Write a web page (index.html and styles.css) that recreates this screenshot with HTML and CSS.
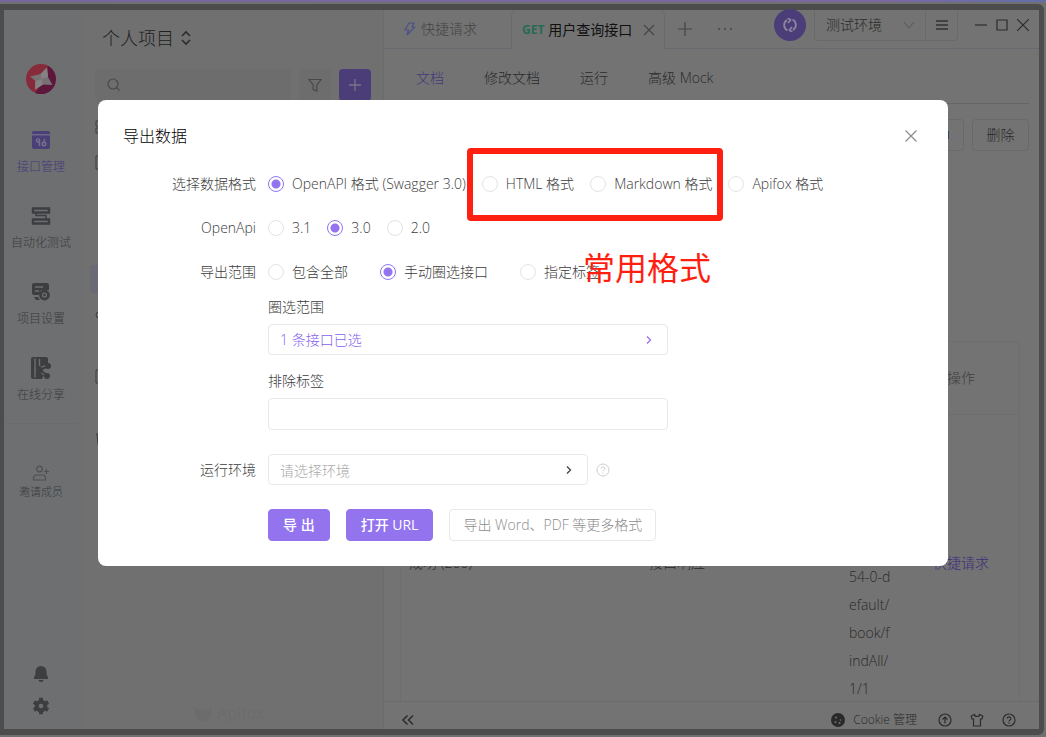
FILE: index.html
```html
<!DOCTYPE html>
<html lang="zh-CN">
<head>
<meta charset="utf-8">
<title>导出数据</title>
<link rel="stylesheet" href="styles.css">
</head>
<body>
<div class="window">
  <nav class="rail">
    <svg class="avatar" viewBox="0 0 30 30"><circle cx="15" cy="15" r="15" fill="#872b3b"/><path d="M22 2A15 15 0 0 1 9 29L16 20z" fill="#5e173c"/><path d="M4 12.500L14.500 10 21 3.500 22 13 26.500 21 17 20.500 9 25.500 9.500 17z" fill="#777174"/><path d="M14.500 10L21 3.500 22 13 15.500 15z" fill="#858283"/><path d="M9 25.500L9.500 17 15.500 15 17 20.500z" fill="#858283"/></svg>
    <a class="rail-item current" href="#"><svg viewBox="0 0 24 24"><rect x="3" y="3" width="18" height="18" rx="2" fill="#4b3f77"/><path d="M3 7.500h18V6H3z" fill="#6d6789"/><g fill="none" stroke="#77738a" stroke-width="1.400"><circle cx="9" cy="12.500" r="1.600"/><path d="M10.500 12.500v5.500M16 11l-2 4"/><circle cx="15" cy="16" r="1.800"/></g></svg>接口管理</a>
    <a class="rail-item" href="#"><svg viewBox="0 0 24 24" fill="none" stroke="#3d3e40" stroke-width="2.400"><path d="M4 4.500h16v4H4zM4 15.500h16v4H4z"/><path d="M7 9v2.500h10V15" stroke-width="1.500"/></svg>自动化测试</a>
    <a class="rail-item" href="#"><svg viewBox="0 0 24 24"><path d="M5 3h13a2 2 0 0 1 2 2v5H12l-2 5H5a2 2 0 0 1-2-2V5a2 2 0 0 1 2-2zM5 17h4l2 3H7z" fill="#3d3e40"/><path d="M6 7h8M6 11h4" stroke="#6d6f71" stroke-width="1.500"/><circle cx="15.500" cy="15" r="4" fill="#6d6f71" stroke="#3d3e40" stroke-width="2.800"/><circle cx="15.500" cy="15" r="1.300" fill="#3d3e40"/></svg>项目设置</a>
    <a class="rail-item" href="#"><svg viewBox="0 0 24 24"><path d="M4 1h13a2 2 0 0 1 2 2v5l-8 3 4 8-2 4H4a2 2 0 0 1-2-2V3a2 2 0 0 1 2-2z" fill="#3d3e40"/><path d="M6 2.500v19M10.500 3v7" stroke="#6d6f71" stroke-width="1.400"/><path d="M19 10l-8 4 8 6" fill="none" stroke="#6d6f71" stroke-width="4"/><path d="M19 10l-8 4 8 6" fill="none" stroke="#3d3e40" stroke-width="2"/><circle cx="19" cy="10" r="3" fill="#3d3e40"/><circle cx="11" cy="14" r="3" fill="#3d3e40"/><circle cx="18" cy="20" r="3" fill="#3d3e40"/></svg>在线分享</a>
    <hr class="rail-line">
    <a class="invite" href="#"><svg viewBox="0 0 20 20" fill="none" stroke="#4f5052" stroke-width="1.200"><circle cx="8.500" cy="6" r="2.800"/><path d="M2.500 17v-2a3 3 0 0 1 3-3h6a3 3 0 0 1 3 3v2zM15.500 6v5M13 8.500h5"/></svg>邀请成员</a>
    <div class="rail-bottom">
      <svg viewBox="0 0 18 18" fill="#3d3e40"><path d="M9 1a5.500 5.500 0 0 1 5.500 5.500V9l1.500 3.500c.4 1-.2 1.500-1 1.500H3c-.8 0-1.400-.5-1-1.500L3.500 9V6.500A5.500 5.500 0 0 1 9 1zM6.500 15h5a2.500 2 0 0 1-5 0z"/></svg>
      <svg viewBox="0 0 18 18"><g fill="none" stroke="#3d3e40"><circle cx="9" cy="9" r="4.300" stroke-width="4"/><path d="M9 .8v3M9 14.200v3M1.900 4.900l2.600 1.500M13.500 11.600l2.600 1.500M16.100 4.900l-2.600 1.500M4.500 11.600l-2.600 1.500" stroke-width="4"/></g></svg>
    </div>
  </nav>

  <aside class="sidebar">
    <div class="project">个人项目<svg viewBox="0 0 12 16" fill="none" stroke="#2c2c2c" stroke-width="1.600"><path d="M2 6l4-4 4 4M2 10l4 4 4-4"/></svg></div>
    <div class="tools">
      <label class="search"><svg viewBox="0 0 16 16" fill="none" stroke="#4a4a4a" stroke-width="1.200"><circle cx="7" cy="7" r="5"/><path d="M10.700 10.700l3 3"/></svg><input type="text" aria-label="搜索"></label>
      <button class="tool" aria-label="筛选"><svg viewBox="0 0 16 16" fill="none" stroke="#484848" stroke-width="1.200"><path d="M2 2.500h12L9.800 8v6L6.200 12.500V8z"/></svg></button>
      <button class="tool add" aria-label="新建"><svg viewBox="0 0 16 16" stroke="#77748a" stroke-width="1.300"><path d="M8 2v12M2 8h12"/></svg></button>
    </div>
    <div class="tree">
      <div class="branch"><svg viewBox="0 0 16 16"><path d="M1 2h5v5H1zM1 9h5v5H1zM9 2h5v5H9z"/></svg></div>
      <div class="branch section"><svg viewBox="0 0 16 16"><path d="M1 1h13v13H1z"/></svg></div>
      <div class="branch picked"></div>
      <div class="branch folder"><svg viewBox="0 0 16 16"><circle cx="4" cy="8" r="3"/></svg></div>
      <div class="branch folder"><svg viewBox="0 0 16 16"><path d="M1 1h13v13H1z"/></svg></div>
      <div class="branch"><svg viewBox="0 0 16 16"><path d="M1 3h13M2 3l1 11h8"/></svg></div>
    </div>
    <div class="brand"><svg viewBox="0 0 20 18"><path d="M2 2c2 4 5 5 8 3 3 2 6 1 8-3 2 7-1 15-8 15S0 9 2 2z" fill="#6c6c6c"/></svg>Apifox</div>
  </aside>

  <main class="main">
    <header class="topbar">
      <button class="tab"><svg viewBox="0 0 12 14" fill="none" stroke="#4b5187" stroke-width="1.200"><path d="M5 1h5L8 5h3L3 13l1.500-5H1z"/></svg>快捷请求</button>
      <button class="tab tab-open"><b>GET</b>用户查询接口<svg class="cross" viewBox="0 0 12 12" stroke="#464646" stroke-width="1.200"><path d="M1 1l10 10M11 1L1 11"/></svg></button>
      <button class="ghost" aria-label="新标签"><svg viewBox="0 0 16 16" stroke="#454545" stroke-width="1.200"><path d="M8 1v14M1 8h14"/></svg></button>
      <button class="ghost" aria-label="更多"><svg viewBox="0 0 16 16" fill="#454545"><circle cx="2" cy="8" r="1"/><circle cx="8" cy="8" r="1"/><circle cx="14" cy="8" r="1"/></svg></button>
      <span class="fill"></span>
      <button class="sync" aria-label="同步"><svg viewBox="0 0 16 16" fill="none" stroke="#8a86a0" stroke-width="1.800"><path d="M5.500 13.500A6 6 0 0 1 5 3M10.500 2.500A6 6 0 0 1 11 13M9 2.500L5.500 1.500M9 2.500L6 6M7 13.500l3.500 1M7 13.500L10 10"/></svg></button>
      <div class="env">
        <select aria-label="环境"><option>测试环境</option></select>
        <svg class="env-arrow" viewBox="0 0 12 12" fill="none" stroke="#555"><path d="M1 3l5 6 5-6"/></svg>
        <button class="env-menu" aria-label="菜单"><svg viewBox="0 0 14 14" stroke="#333" stroke-width="1.500"><path d="M1 3h12M1 7h12M1 11h12"/></svg></button>
      </div>
      <div class="controls">
        <svg viewBox="0 0 12 12" stroke="#2c2c2c" stroke-width="1.200"><path d="M0 6h12"/></svg>
        <svg viewBox="0 0 12 12" fill="none" stroke="#2c2c2c" stroke-width="1.200"><path d="M1 1h10v10H1z"/></svg>
        <svg viewBox="0 0 12 12" stroke="#2c2c2c" stroke-width="1.200"><path d="M0 0l12 12M12 0L0 12"/></svg>
      </div>
    </header>
    <div class="page">
      <div class="subtabs"><a class="on" href="#">文档</a><a href="#">修改文档</a><a href="#">运行</a><a href="#">高级 Mock</a></div>
      <div class="actions"><button class="action code" aria-label="代码"><i></i></button><button class="action">删除</button></div>
      <div class="table-box">
        <table>
          <colgroup><col class="c-name"><col class="c-kind"><col class="c-url"><col></colgroup>
          <thead><tr><th></th><th></th><th></th><th class="op">操作</th></tr></thead>
          <tbody><tr><td>成功 (200)</td><td>接口响应</td><td class="url">54-0-d<br>efault/<br>book/f<br>indAll/<br>1/1</td><td class="op"><a href="#">快捷请求</a></td></tr></tbody>
        </table>
      </div>
    </div>
    <footer class="status">
      <svg viewBox="0 0 14 14" fill="none" stroke="#2c2c2c" stroke-width="1.500"><path d="M6.500 2.500L2 7l4.500 4.500M12 2.500L7.500 7l4.500 4.500"/></svg>
      <span class="fill"></span>
      <a class="cookie" href="#"><svg viewBox="0 0 14 14"><circle cx="7" cy="7" r="7" fill="#292929"/><g fill="#707070"><circle cx="5" cy="4.500" r="1"/><circle cx="9.500" cy="7" r=".8"/><circle cx="4.500" cy="9" r="1"/><circle cx="8.500" cy="10" r="1"/></g></svg>Cookie 管理</a>
      <svg viewBox="0 0 14 14" fill="none" stroke="#2c2c2c" stroke-width="1.200"><circle cx="7" cy="7" r="6"/><path d="M7 10.500v-6M4.500 6.500L7 4l2.500 2.500"/></svg>
      <svg viewBox="0 0 14 14" fill="none" stroke="#2c2c2c" stroke-width="1.200"><path d="M4.500 1.500L1.200 3l.8 3h1.500v7h7V6H12l.8-3-3.300-1.500a2.500 2 0 0 1-5 0z"/></svg>
      <svg viewBox="0 0 14 14" fill="none" stroke="#2c2c2c" stroke-width="1.200"><circle cx="7" cy="7" r="6"/><path d="M5.200 5.600a1.800 1.800 0 1 1 2.600 1.600c-.6.300-.8.600-.8 1.200M7 9.500v1.200"/></svg>
    </footer>
  </main>
</div>

<div class="mask">
  <section class="dialog" role="dialog" aria-labelledby="dialog-title">
    <div class="dialog-head"><h1 id="dialog-title">导出数据</h1><button class="close" aria-label="关闭"><svg viewBox="0 0 12 12" stroke="#8c8c8c" stroke-width="1.200"><path d="M.5.5l11 11M11.500.5l-11 11"/></svg></button></div>
    <form class="form">
      <span class="name">选择数据格式</span>
      <div class="radios">
        <label><input type="radio" name="format" checked>OpenAPI 格式 (Swagger 3.0)</label>
        <label><input type="radio" name="format">HTML 格式</label>
        <label><input type="radio" name="format">Markdown 格式</label>
        <label><input type="radio" name="format">Apifox 格式</label>
      </div>
      <span class="name">OpenApi</span>
      <div class="radios">
        <label><input type="radio" name="version">3.1</label>
        <label><input type="radio" name="version" checked>3.0</label>
        <label><input type="radio" name="version">2.0</label>
      </div>
      <span class="name">导出范围</span>
      <div>
        <div class="radios wide">
          <label><input type="radio" name="scope">包含全部</label>
          <label><input type="radio" name="scope" checked>手动圈选接口</label>
          <label><input type="radio" name="scope">指定标签</label>
        </div>
        <div class="field"><label for="range">圈选范围</label><button type="button" id="range" class="box range">1 条接口已选<svg viewBox="0 0 8 8" fill="none" stroke="#9373ee" stroke-width="1.300"><path d="M2 .5L5.500 4 2 7.500"/></svg></button></div>
        <div class="field"><label for="tags">排除标签</label><input id="tags" class="box" type="text"></div>
      </div>
      <label class="name" for="run-env">运行环境</label>
      <div class="runtime">
        <div class="picker"><select id="run-env" class="box"><option>请选择环境</option></select><svg viewBox="0 0 8 8" fill="none" stroke="#444" stroke-width="1.300"><path d="M2 .5L5.500 4 2 7.500"/></svg></div>
        <svg class="help" viewBox="0 0 14 14" fill="none" stroke="#cfcfcf"><circle cx="7" cy="7" r="6"/><path d="M5.200 5.600a1.800 1.800 0 1 1 2.600 1.600c-.6.300-.8.600-.8 1.200M7 9.500v1.200"/></svg>
      </div>
      <div class="buttons">
        <button type="button" class="btn primary">导 出</button>
        <button type="button" class="btn primary">打开 URL</button>
        <button type="button" class="btn">导出 Word、PDF 等更多格式</button>
      </div>
    </form>
    <div class="mark-box"></div>
    <div class="mark-text">常用格式</div>
  </section>
</div>
</body>
</html>
```
FILE: styles.css
```css
* { box-sizing: border-box; }
body {
  margin: 0;
  height: 100vh;
  padding-top: 4px;
  display: flex;
  overflow: hidden;
  background: linear-gradient(90deg, #7765a0, #7a67a2 85%, #6170a8) top / 100% 2px no-repeat #707070;
  font: 300 14px/20px "Open Sans", "Noto Sans CJK SC", sans-serif;
  color: #2a2a2a;
}
button, input, select { font: inherit; color: inherit; margin: 0; padding: 0; border: 0; background: none; border-radius: 4px; outline: 0; }
select { appearance: none; }
a { color: inherit; text-decoration: none; }
svg { display: block; flex: none; }
.fill { flex: 1; }

.window {
  flex: 1;
  min-width: 0;
  margin: 0 2px 2px 0;
  border: solid #4c4c4c;
  border-width: 6px 5px 6px 4px;
  border-radius: 0 6px 6px 0;
  background: #737373;
  display: grid;
  grid-template-columns: 78px 302px minmax(0, 1fr);
}

.rail { background: #6d6f71; color: #3a3b3d; font-size: 12px; display: flex; flex-direction: column; align-items: center; padding: 54px 4px 14px 0; }
.avatar { width: 30px; height: 30px; margin: 0 0 34px; }
.rail-item { display: flex; flex-direction: column; align-items: center; gap: 5px; height: 76px; }
.rail-item svg { width: 24px; height: 24px; }
.rail-item.current { color: #46387a; }
.rail-line { width: 72px; margin: -9px 0 0; border: 0; border-top: 1px solid #696b6d; }
.invite { display: flex; flex-direction: column; align-items: center; margin-top: 39px; font-size: 11px; line-height: 18px; }
.invite svg { width: 20px; height: 20px; }
.rail-bottom { margin-top: auto; display: grid; gap: 14px; }
.rail-bottom svg { width: 18px; height: 18px; }

.sidebar { background: #707070; border-right: 1px solid #6b6b6b; padding: 15px 12px 6px 13px; display: flex; flex-direction: column; min-width: 0; }
.project { display: flex; align-items: center; gap: 6px; padding-left: 7px; font-size: 18px; line-height: 26px; color: #202020; }
.project svg { width: 12px; height: 16px; }
.tools { display: flex; gap: 8px; margin-top: 18px; }
.search { flex: 1; min-width: 0; display: flex; align-items: center; height: 32px; padding-left: 11px; border-radius: 4px; background: #6d6d6d; }
.search input { flex: 1; min-width: 0; }
.search svg, .tool svg { width: 16px; height: 16px; }
.tool { display: grid; place-items: center; width: 32px; height: 32px; background: #6d6d6d; }
.tool.add { background: #4b3d78; }
.tree { margin: 12px 0 0 -5px; }
.branch { height: 28px; margin-bottom: 8px; padding: 6px 5px; border-radius: 4px; }
.branch svg { width: 16px; height: 16px; fill: none; stroke: #3c3c3c; }
.branch.section { margin-bottom: 88px; }
.branch.picked { background: #6a6976; }
.branch.folder { margin-bottom: 34px; }
.brand { margin-top: auto; display: flex; justify-content: center; align-items: center; gap: 4px; padding-right: 8px; font-weight: 400; font-size: 16px; color: #6c6c6c; }
.brand svg { width: 20px; height: 18px; }

.main { min-width: 0; min-height: 0; display: flex; flex-direction: column; height: calc(100vh - 18px); }
.topbar { height: 39px; display: flex; flex: none; border-bottom: 1px solid #69696f; }
.tab { display: flex; align-items: center; gap: 5px; width: 127px; padding-left: 20px; color: #444; }
.tab svg { width: 12px; height: 14px; }
.tab-open { width: 154px; height: 39px; padding-left: 10px; gap: 4px; color: #101010; font-weight: 400; background: #737373; border: solid #69696f; border-width: 0 1px; border-radius: 6px 6px 0 0; }
.tab-open b { color: #256b54; font-weight: 700; font-size: 12px; }
.tab-open .cross { width: 12px; height: 12px; margin-left: 7px; }
.ghost { width: 40px; display: grid; place-items: center; }
.ghost svg { width: 16px; height: 16px; }
.sync { width: 32px; height: 32px; border-radius: 50%; background: #4b3d78; display: grid; place-items: center; margin: -1px 8px 0 0; }
.sync svg { width: 16px; height: 16px; }
.env { display: flex; align-items: center; height: 31px; border: 1px solid #6a6a6a; border-top: 0; border-radius: 0 0 4px 4px; }
.env select { width: 80px; padding-left: 11px; }
.env-arrow { width: 12px; height: 12px; margin: 0 10px 0 8px; }
.env-menu { width: 32px; height: 30px; border-left: 1px solid #6a6a6a; border-radius: 0; display: grid; place-items: center; }
.env-menu svg { width: 14px; height: 14px; }
.controls { display: flex; align-items: center; gap: 9px; height: 30px; padding: 0 10px 0 17px; }
.controls svg { width: 12px; height: 12px; }

.page { flex: 1; min-height: 0; overflow: hidden; padding: 0 10px 0 16px; }
.subtabs { display: flex; gap: 40px; height: 55px; padding: 19px 16px 0; border-bottom: 1px solid #666; }
.subtabs .on { color: #46387a; }
.actions { display: flex; justify-content: flex-end; gap: 8px; padding-top: 15px; }
.action { width: 57px; height: 32px; border: 1px solid #696969; }
.action.code { display: flex; align-items: center; justify-content: flex-end; padding-right: 14px; }
.code i { width: 8px; height: 8px; background: #28476b; }
.table-box { margin: 190px 9px 0 0; border: 1px solid #6e6e6e; border-radius: 4px; }
table { width: 100%; table-layout: fixed; border-collapse: collapse; }
.c-name { width: 240px; }
.c-kind { width: 200px; }
.c-url { width: 84px; }
th, td { padding: 0 8px; text-align: left; font-weight: 300; line-height: 28px; }
th { height: 72px; border-bottom: 1px solid #6e6e6e; }
td { height: 298px; }
td.url { vertical-align: bottom; padding-bottom: 9px; }
.op { padding: 0 22px 0 0; text-align: center; }
th.op { color: #404040; }
.op a { color: #3e2c7a; }
.status { height: 28px; flex: none; display: flex; align-items: center; gap: 18px; padding: 9px 23px 0 17px; border-top: 1px solid #6b6b6b; font-size: 12px; }
.status svg { width: 14px; height: 14px; }
.cookie { display: flex; align-items: center; gap: 8px; margin-right: 3px; }

.mask { position: fixed; inset: 0; display: flex; justify-content: center; align-items: flex-start; padding: 100px 24px 0; }
.dialog { position: relative; width: 850px; padding: 24px; border-radius: 8px; background: #fff; color: #3c3c3c; }
.dialog-head { display: flex; justify-content: space-between; align-items: center; margin-bottom: 24px; }
h1 { margin: 0 0 0 1px; font-size: 16px; line-height: 24px; font-weight: 300; color: #000; }
.close { display: grid; place-items: center; width: 26px; height: 24px; }
.close svg { width: 12px; height: 12px; }
.form { display: grid; grid-template-columns: 134px minmax(0, 1fr); column-gap: 12px; }
.name { text-align: right; line-height: 24px; }
.radios { display: flex; gap: 16px; height: 24px; margin-bottom: 20px; white-space: nowrap; }
.radios label { display: flex; align-items: center; gap: 8px; }
.radios.wide { gap: 32px; margin-bottom: 13px; }
.radios input { appearance: none; width: 16px; height: 16px; border: 1px solid #e3e3e3; border-radius: 50%; }
.radios input:checked { border-color: #9373ee; background: radial-gradient(circle, #9373ee 4px, transparent 5px); }
.field { width: 400px; max-width: 100%; margin-bottom: 16px; }
.field label { display: block; margin-bottom: 7px; }
.box { display: block; width: 100%; height: 32px; padding: 0 11px; border: 1px solid #e8e8e8; background: #fff; }
.range { display: flex; align-items: center; justify-content: space-between; height: 31px; padding-right: 14px; color: #855fee; }
.range svg, .picker svg { width: 8px; height: 8px; }
.name[for="run-env"], .runtime { margin-top: 8px; line-height: 31px; }
.runtime { display: flex; align-items: center; gap: 8px; }
.picker { display: grid; width: 320px; align-items: center; }
.picker select, .picker svg { grid-area: 1 / 1; }
.picker select { height: 31px; color: #a8a8a8; }
.picker svg { justify-self: end; margin-right: 15px; z-index: 1; }
.help { width: 14px; height: 14px; }
.buttons { grid-column: 2; display: flex; gap: 16px; margin: 24px 0 1px; }
.btn { height: 32px; padding: 0 13px; border: 1px solid #e8e8e8; color: #8c8c8c; white-space: nowrap; }
.btn.primary { padding: 0 14px; border-color: #9373ee; background: #9373ee; color: #fff; font-weight: 500; }
.mark-box { position: absolute; left: 369px; top: 48px; width: 256px; height: 73px; border: 6px solid #ff1f10; border-radius: 4px; }
.mark-text { position: absolute; left: 485px; top: 148px; font-size: 32px; line-height: 40px; font-weight: 400; color: #ff1f10; }
```
